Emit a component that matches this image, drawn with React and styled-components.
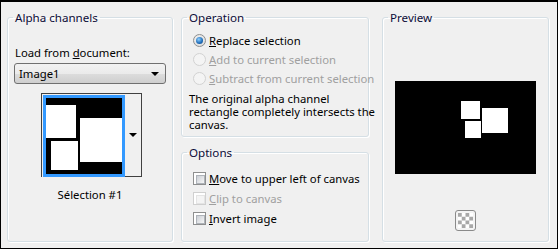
import React from "react";
import styled, { createGlobalStyle } from "styled-components";

const Global = createGlobalStyle`
  html, body { margin: 0; padding: 0; background: #f0f0f0; }
  * { box-sizing: border-box; }
`;

const Window = styled.div`
  width: 558px;
  height: 249px;
  border: 1px solid #000;
  border-top-width: 2px;
  background: #f0f0f0;
  display: grid;
  grid-template-columns: 166px 193px 167px;
  column-gap: 8px;
  padding: 8px 4px 5px 6px;
  font-family: "Noto Sans", "Open Sans", sans-serif;
  font-size: 11.3px;
  color: #000;
`;

const Group = styled.fieldset`
  margin: 0;
  min-width: 0;
  border: 1px solid #d5dfe5;
  border-radius: 3px;
  box-shadow: inset 1px 1px 0 #fff, 1px 1px 0 #fff;
  padding: 0 6px;
  display: flex;
  flex-direction: column;
  align-items: ${({ $center }) => ($center ? "center" : "stretch")};
  height: ${({ $h }) => $h || "auto"};
`;

const Legend = styled.legend`
  padding: 0 2px;
  margin-left: -1px;
  line-height: 15px;
  font-size: 11.6px;
  color: #0c0c38;
`;

const Column = styled.div`
  display: flex;
  flex-direction: column;
  gap: 8px;
  margin-right: 5px;
`;

const Label = styled.div`
  margin-top: 20px;
  line-height: 15px;
  padding-left: 1px;
  white-space: nowrap;
`;

const Select = styled.div`
  height: 21px;
  margin-top: 3px;
  border: 1px solid #707070;
  border-radius: 3px;
  background: linear-gradient(#f2f2f2, #ebebeb 50%, #dddddd 51%, #cfcfcf);
  display: flex;
  align-items: center;
  justify-content: space-between;
  padding: 0 6px 0 4px;
`;

const Arrow = styled.span`
  width: 0;
  height: 0;
  border-left: 4px solid transparent;
  border-right: 4px solid transparent;
  border-top: 4px solid #000;
`;

const ThumbFrame = styled.div`
  align-self: center;
  margin: 9px 0 0 2px;
  display: flex;
  border-top: 1px solid #404040;
  border-left: 1px solid #404040;
  padding: 1px 0 0 1px;
`;

const Thumb = styled.div`
  width: 82px;
  height: 82px;
  border: 3px solid #3399ff;
  background: #000;
`;

const ThumbButton = styled.div`
  width: 17px;
  display: flex;
  align-items: center;
  justify-content: center;
  border-right: 1px solid #404040;
  border-bottom: 1px solid #404040;
  margin-top: -1px;
`;

const Caption = styled.div`
  text-align: center;
  line-height: 15px;
  margin-top: 10px;
`;

const Options = styled.div`
  display: flex;
  flex-direction: column;
  padding-top: ${({ $top }) => $top};
`;

const Row = styled.label`
  height: ${({ $h }) => $h};
  display: flex;
  align-items: center;
  padding-left: 5px;
  white-space: nowrap;
  color: ${({ $disabled }) => ($disabled ? "#a0a0a0" : "#000")};
`;

const Radio = styled.span`
  width: 13px;
  height: 13px;
  border-radius: 50%;
  border: 1px solid ${({ $disabled }) => ($disabled ? "#d2d2d2" : "#8e8f8f")};
  background: ${({ $disabled }) =>
    $disabled ? "#f4f4f4" : "radial-gradient(circle at 40% 40%, #f4f4f4, #d8d8d8)"};
  display: flex;
  align-items: center;
  justify-content: center;
  flex: none;
  margin-right: 3px;
`;

const Dot = styled.span`
  width: 7px;
  height: 7px;
  border-radius: 50%;
  background: radial-gradient(circle at 40% 35%, #8fd0ff, #1d6bb8 60%, #0d3f7a);
`;

const Check = styled.span`
  width: 13px;
  height: 13px;
  border: 1px solid ${({ $disabled }) => ($disabled ? "#d0d0d0" : "#8e8f8f")};
  background: #fff;
  padding: 2px;
  flex: none;
  margin-right: 3px;
  &::after {
    content: "";
    display: block;
    width: 100%;
    height: 100%;
    border: 1px solid ${({ $disabled }) => ($disabled ? "#e4e4e4" : "#aeb3b9")};
    background: ${({ $disabled }) =>
      $disabled ? "#f4f4f4" : "linear-gradient(135deg, #cbcfd5, #f6f6f6)"};
  }
`;

const Note = styled.p`
  margin: 4px 0 0 1px;
  line-height: 13px;
  white-space: nowrap;
`;

const PreviewBox = styled.svg`
  margin-top: 56px;
  width: 141px;
  height: 93px;
  display: block;
`;

const CheckerButton = styled.button`
  margin-top: 36px;
  width: 21px;
  height: 21px;
  padding: 2px;
  border: 1px solid #8a8a8a;
  border-radius: 3px;
  background: #f4f4f4;
  display: flex;
  align-items: center;
  justify-content: center;
`;

const ThumbArt = () => (
  <svg width="76" height="76" viewBox="0 0 76 76">
    <rect width="76" height="76" fill="#000" />
    <rect x="0" y="7" width="30" height="33" fill="#fff" />
    <rect x="34" y="20" width="42" height="44" fill="#fff" />
    <rect x="5" y="43" width="27" height="29" fill="#fff" />
  </svg>
);

const PreviewArt = () => (
  <PreviewBox viewBox="0 0 141 93">
    <rect width="141" height="93" fill="#000" />
    <rect x="66" y="20" width="19" height="18" fill="#fff" />
    <rect x="87" y="27" width="26" height="25" fill="#fff" />
    <rect x="70" y="40" width="16" height="17" fill="#fff" />
  </PreviewBox>
);

const Checker = () => {
  const cells = [];
  for (let r = 0; r < 4; r++)
    for (let c = 0; c < 4; c++)
      if ((r + c) % 2 === 0)
        cells.push(<rect key={`${r}-${c}`} x={c * 4} y={r * 4} width="4" height="4" fill="#a8a8a8" />);
  return (
    <svg width="15" height="15" viewBox="0 0 16 16">
      <rect width="16" height="16" fill="#fff" />
      {cells}
    </svg>
  );
};

export default function App() {
  return (
    <>
      <Global />
      <Window>
        <Group $h="232px">
          <Legend>Alpha channels</Legend>
          <Label>
            Load from <u>d</u>ocument:
          </Label>
          <Select>
            <span>Image1</span>
            <Arrow />
          </Select>
          <ThumbFrame>
            <Thumb>
              <ThumbArt />
            </Thumb>
            <ThumbButton>
              <Arrow />
            </ThumbButton>
          </ThumbFrame>
          <Caption>Sélection #1</Caption>
        </Group>

        <Column>
          <Group $h="127px">
            <Legend>Operation</Legend>
            <Options $top="6px">
              <Row $h="19px">
                <Radio>
                  <Dot />
                </Radio>
                <span>
                  <u>R</u>eplace selection
                </span>
              </Row>
              <Row $h="19px" $disabled>
                <Radio $disabled />
                <span>
                  <u>A</u>dd to current selection
                </span>
              </Row>
              <Row $h="19px" $disabled>
                <Radio $disabled />
                <span>
                  <u>S</u>ubtract from current selection
                </span>
              </Row>
            </Options>
            <Note>
              The original alpha channel
              <br />
              rectangle completely intersects the
              <br />
              canvas.
            </Note>
          </Group>
          <Group $h="97px">
            <Legend>Options</Legend>
            <Options $top="8px">
              <Row $h="20px">
                <Check />
                <span>
                  <u>M</u>ove to upper left of canvas
                </span>
              </Row>
              <Row $h="20px" $disabled>
                <Check $disabled />
                <span>
                  <u>C</u>lip to canvas
                </span>
              </Row>
              <Row $h="20px">
                <Check />
                <span>
                  <u>I</u>nvert image
                </span>
              </Row>
            </Options>
          </Group>
        </Column>

        <Group $h="232px" $center>
          <Legend>Preview</Legend>
          <PreviewArt />
          <CheckerButton>
            <Checker />
          </CheckerButton>
        </Group>
      </Window>
    </>
  );
}
